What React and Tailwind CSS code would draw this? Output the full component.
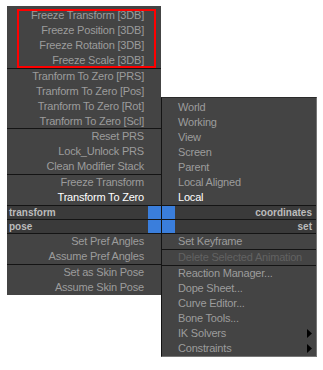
/**
 * Quad menu (3ds Max style) with an annotation box over the freeze items.
 */

const FONT = "font-['Liberation_Sans',Arial,sans-serif]";

const leftGroups = [
  ['Freeze Transform [3DB]', 'Freeze Position [3DB]', 'Freeze Rotation [3DB]', 'Freeze Scale [3DB]'],
  ['Tranform To Zero [PRS]', 'Tranform To Zero [Pos]', 'Tranform To Zero [Rot]', 'Tranform To Zero [Scl]'],
  ['Reset PRS', 'Lock_Unlock PRS', 'Clean Modifier Stack'],
  ['Freeze Transform', { label: 'Transform To Zero', active: true }],
];

const leftLower = [
  ['Set Pref Angles', 'Assume Pref Angles'],
  ['Set as Skin Pose', 'Assume Skin Pose'],
];

const coordItems = ['World', 'Working', 'View', 'Screen', 'Parent', 'Local Aligned', { label: 'Local', active: true }];

const setItems = [
  ['Set Keyframe'],
  [{ label: 'Delete Selected Animation', disabled: true }],
  [
    'Reaction Manager...',
    'Dope Sheet...',
    'Curve Editor...',
    'Bone Tools...',
    { label: 'IK Solvers', sub: true },
    { label: 'Constraints', sub: true },
  ],
];

const norm = (it) => (typeof it === 'string' ? { label: it } : it);

const Row = ({ item, align }) => {
  const { label, active, disabled, sub } = norm(item);
  const color = active ? 'text-white' : disabled ? 'text-[#626262]' : 'text-[#9c9c9c]';
  return (
    <div
      className={`flex h-[15px] items-center leading-[15px] whitespace-nowrap ${color} ${
        align === 'right' ? 'justify-end pr-[17px]' : 'justify-between pl-[16px] pr-[4px]'
      }`}
    >
      <span>{label}</span>
      {sub && (
        <svg width="5" height="9" viewBox="0 0 5 9">
          <path d="M0 0 L5 4.5 L0 9 Z" fill="#000" />
        </svg>
      )}
    </div>
  );
};

const Group = ({ items, align, last, className = '' }) => (
  <div className={`${last ? '' : 'border-b border-[#141414]'} ${className}`}>
    {items.map((it, i) => (
      <Row key={i} item={it} align={align} />
    ))}
  </div>
);

const Bar = ({ label, side }) => (
  <div className="flex h-[14px] border-b border-[#141414] bg-[#3a3a3a] text-[10px] font-bold leading-[13px] tracking-normal text-[#bcbcbc]">
    {side === 'left' ? (
      <>
        <span className="flex-1 pl-[2px]">{label}</span>
        <span className="w-[13px] bg-[#3a7edc]" />
      </>
    ) : (
      <>
        <span className="w-[13px] bg-[#3a7edc]" />
        <span className="flex-1 pr-[4px] text-right">{label}</span>
      </>
    )}
  </div>
);

const groupClass = ['pt-[2px]', 'h-[60px]', '', ''];

export default function App() {
  return (
    <div className={`min-h-[370px] bg-white pl-[7px] pt-[6px] text-[11px] tracking-[-0.2px] ${FONT}`}>
      <div className="flex items-start">
        {/* left quadrants */}
        <div className="relative w-[154px] bg-[#444444]">
          {leftGroups.map((g, i) => (
            <Group key={i} items={g} align="right" className={groupClass[i]} />
          ))}
          <Bar label="transform" side="left" />
          <Bar label="pose" side="left" />
          {leftLower.map((g, i) => (
            <Group key={i} items={g} align="right" last={i === leftLower.length - 1} />
          ))}
          {/* red annotation box */}
          <div className="pointer-events-none absolute left-[10px] top-[3px] h-[59px] w-[139px] border-2 border-[#ff0000]" />
        </div>

        {/* right quadrants */}
        <div className="mt-[91px] w-[156px] border-t border-l border-t-[#2a2a2a] border-l-[#141414] border-r border-b border-r-[#767676] border-b-[#767676] bg-[#444444]">
          <div className="border-b border-[#141414] pt-[2px]">
            {coordItems.map((it, i) => (
              <Row key={i} item={it} align="left" />
            ))}
          </div>
          <Bar label="coordinates" side="right" />
          <Bar label="set" side="right" />
          {setItems.map((g, i) => (
            <Group key={i} items={g} align="left" last={i === setItems.length - 1} />
          ))}
        </div>
      </div>
    </div>
  );
}
